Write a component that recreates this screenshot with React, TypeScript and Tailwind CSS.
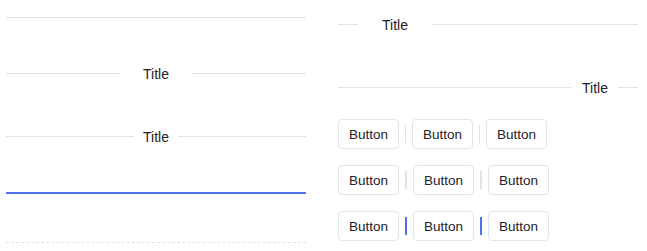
function Line({ className = '' }: { className?: string }) {
  return <div className={`h-px bg-[#e2e3e8] ${className}`} />;
}

function TitleDivider({ left, right, gap }: { left: string; right: string; gap: string }) {
  return (
    <div className="flex h-5 items-center">
      <Line className={left} />
      <span className={`${gap} pt-[2px] text-[14px] leading-5 text-[#1d2129]`}>Title</span>
      <Line className={right} />
    </div>
  );
}

function Button() {
  return (
    <button className="flex h-[30px] w-[61px] items-center justify-center rounded-[4px] border border-[#e3e4e8] bg-white pt-[2px] text-[13.5px] text-[#1d2129]">
      Button
    </button>
  );
}

function ButtonRow({ bar }: { bar: string }) {
  return (
    <div className="flex items-center">
      <Button />
      <div className={`mx-[6px] h-[18px] ${bar}`} />
      <Button />
      <div className={`mx-[6px] h-[18px] ${bar}`} />
      <Button />
    </div>
  );
}

export default function App() {
  return (
    <div
      className="flex h-[251px] w-[647px] gap-8 bg-white pl-[6px]"
      style={{ fontFamily: '"Liberation Sans", Arial, sans-serif' }}
    >
      <div className="flex w-[300px] flex-col">
        <Line className="mt-[17px]" />
        <div className="mt-[45px]">
          <TitleDivider left="flex-1" right="flex-1" gap="px-[23px]" />
        </div>
        <div className="mt-[43px]">
          <TitleDivider left="flex-1" right="flex-1" gap="px-[9px]" />
        </div>
        <div className="mt-[46px] h-[2px] bg-[#4f6ff0]" />
        <div className="mt-[48px] border-t border-dashed border-[#e2e3e8]" />
      </div>

      <div className="flex w-[300px] flex-col">
        <div className="mt-[14px]">
          <TitleDivider left="w-5" right="flex-1" gap="px-[24px]" />
        </div>
        <div className="mt-[43px]">
          <TitleDivider left="flex-1" right="w-5" gap="px-[10px]" />
        </div>
        <div className="mt-[22px] flex flex-col gap-4">
          <ButtonRow bar="w-px bg-[#e2e3e8]" />
          <ButtonRow bar="w-[2px] bg-[#e2e3e8]" />
          <ButtonRow bar="w-[2px] bg-[#4f6ff0]" />
        </div>
      </div>
    </div>
  );
}
